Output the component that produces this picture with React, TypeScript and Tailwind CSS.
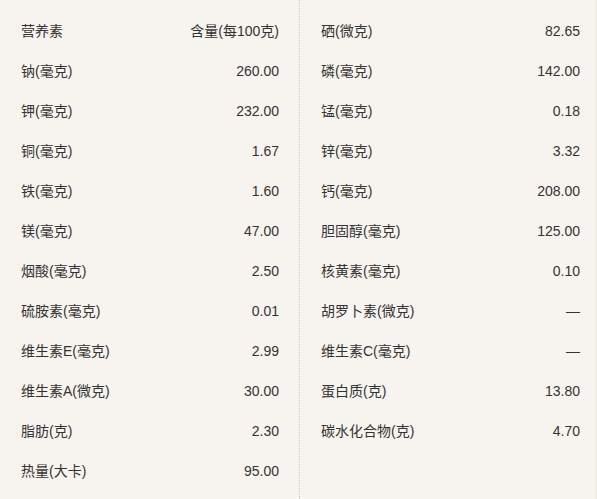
import React from 'react';

type Row = { name: string; value: string };

const left: Row[] = [
  { name: '营养素', value: '含量(每100克)' },
  { name: '钠(毫克)', value: '260.00' },
  { name: '钾(毫克)', value: '232.00' },
  { name: '铜(毫克)', value: '1.67' },
  { name: '铁(毫克)', value: '1.60' },
  { name: '镁(毫克)', value: '47.00' },
  { name: '烟酸(毫克)', value: '2.50' },
  { name: '硫胺素(毫克)', value: '0.01' },
  { name: '维生素E(毫克)', value: '2.99' },
  { name: '维生素A(微克)', value: '30.00' },
  { name: '脂肪(克)', value: '2.30' },
  { name: '热量(大卡)', value: '95.00' },
];

const right: Row[] = [
  { name: '硒(微克)', value: '82.65' },
  { name: '磷(毫克)', value: '142.00' },
  { name: '锰(毫克)', value: '0.18' },
  { name: '锌(毫克)', value: '3.32' },
  { name: '钙(毫克)', value: '208.00' },
  { name: '胆固醇(毫克)', value: '125.00' },
  { name: '核黄素(毫克)', value: '0.10' },
  { name: '胡罗卜素(微克)', value: '—' },
  { name: '维生素C(毫克)', value: '—' },
  { name: '蛋白质(克)', value: '13.80' },
  { name: '碳水化合物(克)', value: '4.70' },
];

function Column({ rows, className }: { rows: Row[]; className: string }) {
  return (
    <div className={className}>
      {rows.map((r) => (
        <div key={r.name} className="flex h-10 items-center justify-between">
          <span>{r.name}</span>
          <span>{r.value}</span>
        </div>
      ))}
    </div>
  );
}

export default function App() {
  return (
    <div
      className="w-[597px] h-[499px] bg-[#f7f4f0] text-[14px] text-[#333] overflow-hidden border-r border-[#ebe7e1]"
      style={{ fontFamily: '"Liberation Sans", "Noto Sans CJK SC", sans-serif' }}
    >
      <div className="flex h-full">
        <Column rows={left} className="w-[300px] pt-[11px] pl-[21px] pr-[20px] border-r border-dotted border-[#c8c4be]" />
        <Column rows={right} className="flex-1 pt-[11px] pl-[21px] pr-[16px]" />
      </div>
    </div>
  );
}
